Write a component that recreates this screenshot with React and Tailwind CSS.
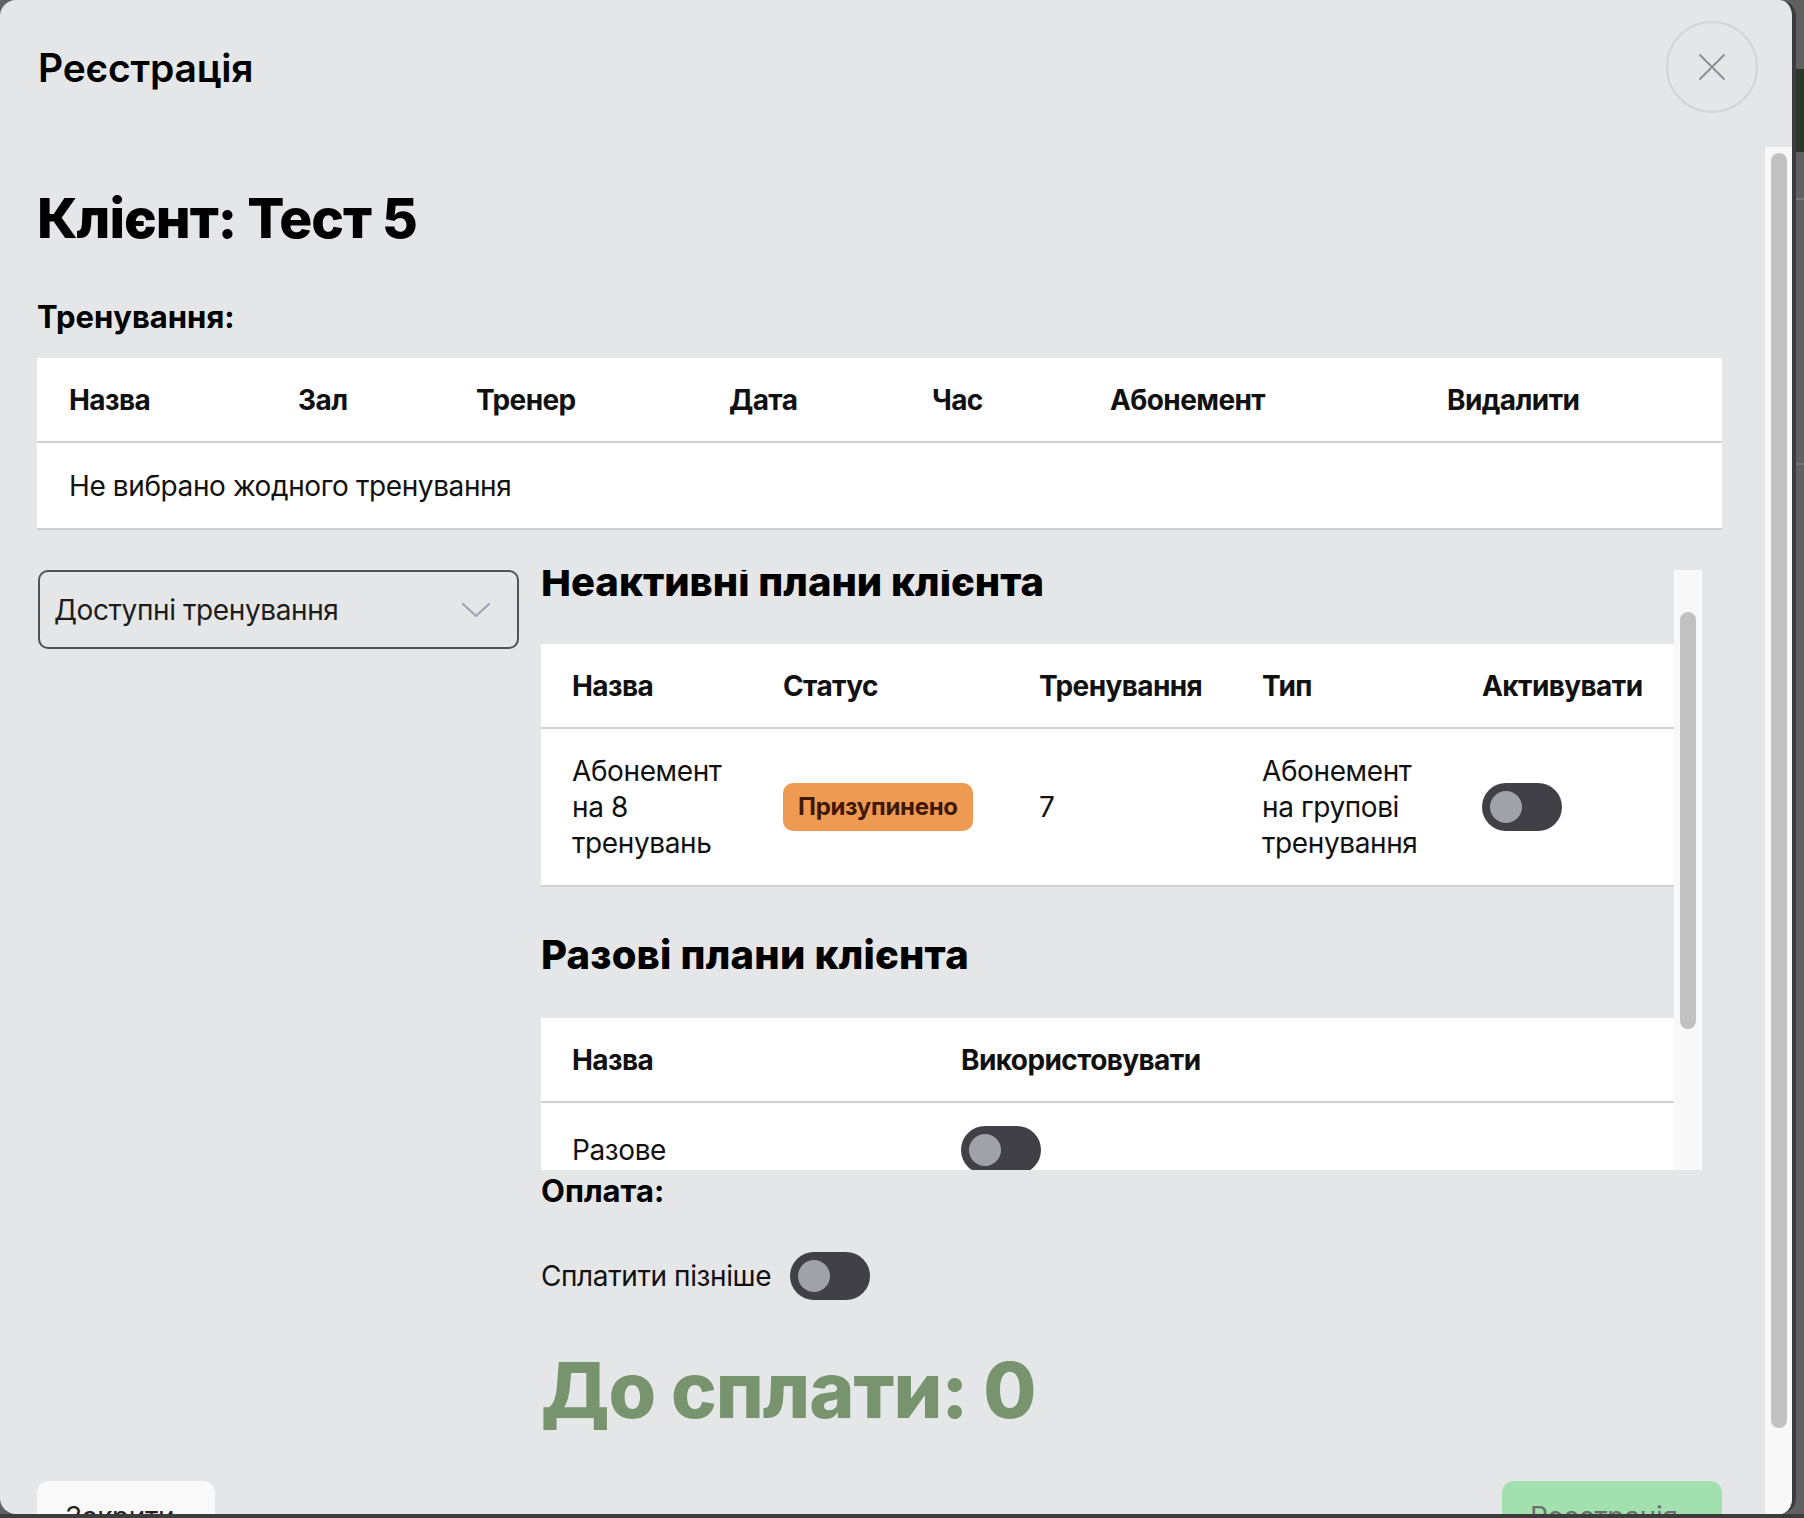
import React from 'react';

const Toggle = () => (
  <div className="w-[80px] h-[48px] rounded-full bg-[#414046] flex items-center px-[8px] shrink-0">
    <div className="w-[32px] h-[32px] rounded-full bg-[#a1a1aa]" />
  </div>
);

const Chevron = () => (
  <svg width="30" height="16" viewBox="0 0 30 16" fill="none">
    <path d="M2 2 L15 14 L28 2" stroke="#9ca3af" strokeWidth="2" strokeLinecap="round" strokeLinejoin="round" />
  </svg>
);

const CloseIcon = () => (
  <svg width="28" height="28" viewBox="0 0 28 28" fill="none">
    <path d="M2 2 L26 26 M26 2 L2 26" stroke="#8d8f94" strokeWidth="2" strokeLinecap="round" />
  </svg>
);

const trainingCols = ['Назва', 'Зал', 'Тренер', 'Дата', 'Час', 'Абонемент', 'Видалити'];

const App = () => {
  return (
    <div className="w-full h-[1518px] bg-[#606060] overflow-hidden flex flex-col font-['Inter','Noto_Sans',sans-serif] text-[#111]">
      <div className="flex h-[1514px]">
        {/* modal */}
        <div className="w-[1796px] h-[1514px] bg-[#e5e6e8] rounded-[16px] border-r-[4px] border-[#3b3b40] flex flex-col overflow-hidden shrink-0">
          <div className="h-[147px] flex justify-between items-start pl-[38px] pr-[34px] shrink-0">
            <h1 className="mt-[44px] text-[39px] leading-[48px] font-semibold tracking-[-0.2px] text-black">Реєстрація</h1>
            <button className="mt-[21px] w-[92px] h-[92px] rounded-full border-2 border-[#d3d4d7] flex items-center justify-center">
              <CloseIcon />
            </button>
          </div>

          <div className="flex flex-1 min-h-0">
            <div className="flex-1 pl-[37px] pr-[43px] pt-[38px] overflow-hidden">
              <h2 className="text-[55px] leading-[67px] font-extrabold tracking-[-1px] text-black">Клієнт: Тест 5</h2>
              <h3 className="mt-[45px] text-[31px] leading-[40px] font-bold text-black">Тренування:</h3>

              <div className="mt-[21px] bg-white">
                <div className="grid grid-cols-[229px_178px_253px_203px_178px_337px_1fr] h-[85px] items-center border-b-2 border-[#d0d0d0]">
                  {trainingCols.map((c) => (
                    <div key={c} className="pl-[32px] text-[28px] leading-[36px] font-bold tracking-[-0.6px]">{c}</div>
                  ))}
                </div>
                <div className="h-[87px] flex items-center pl-[32px] border-b-2 border-[#d0d0d0] text-[28px] leading-[36px] tracking-[-0.4px]">
                  Не вибрано жодного тренування
                </div>
              </div>

              <div className="mt-[40px] flex gap-[22px]">
                <div className="w-[481px] ml-[1px] shrink-0">
                  <div className="h-[79px] rounded-[10px] border-2 border-[#505055] flex items-center justify-between pl-[14px] pr-[26px]">
                    <span className="text-[28px] leading-[36px] tracking-[-0.4px] text-[#1c1c1c]">Доступні тренування</span>
                    <Chevron />
                  </div>
                </div>

                <div className="w-[1181px] flex flex-col">
                  <div className="w-[1161px] h-[600px] flex">
                    <div className="w-[1133px] overflow-hidden">
                      <div className="-mt-[18px]">
                        <h3 className="text-[40px] leading-[60px] font-extrabold text-black">Неактивні плани клієнта</h3>
                        <div className="mt-[32px] bg-white">
                          <div className="grid grid-cols-[211px_256px_223px_220px_1fr] h-[85px] items-center border-b-2 border-[#d0d0d0] text-[28px] leading-[36px] font-bold tracking-[-0.6px]">
                            <div className="pl-[31px]">Назва</div>
                            <div className="pl-[31px]">Статус</div>
                            <div className="pl-[31px]">Тренування</div>
                            <div className="pl-[31px]">Тип</div>
                            <div className="pl-[31px]">Активувати</div>
                          </div>
                          <div className="grid grid-cols-[211px_256px_223px_220px_1fr] h-[158px] items-center border-b-2 border-[#d0d0d0] text-[28px] leading-[36px] tracking-[-0.4px]">
                            <div className="pl-[31px] pr-[20px]">Абонемент на 8 тренувань</div>
                            <div className="pl-[31px]">
                              <span className="inline-flex items-center h-[48px] px-[15px] rounded-[10px] bg-[#ee9a52] text-[#3f1806] text-[24px] font-bold tracking-[-0.3px]">Призупинено</span>
                            </div>
                            <div className="pl-[31px]">7</div>
                            <div className="pl-[31px] pr-[20px]">Абонемент на групові тренування</div>
                            <div className="pl-[31px]"><Toggle /></div>
                          </div>
                        </div>

                        <h3 className="mt-[38px] text-[40px] leading-[60px] font-extrabold tracking-[0.2px] text-black">Разові плани клієнта</h3>
                        <div className="mt-[33px] bg-white">
                          <div className="grid grid-cols-[420px_1fr] h-[85px] items-center border-b-2 border-[#d0d0d0] text-[28px] leading-[36px] font-bold tracking-[-0.6px]">
                            <div className="pl-[31px]">Назва</div>
                            <div>Використовувати</div>
                          </div>
                          <div className="grid grid-cols-[420px_1fr] h-[96px] items-center border-b-2 border-[#d0d0d0] text-[28px] leading-[36px] tracking-[-0.4px]">
                            <div className="pl-[31px]">Разове</div>
                            <div><Toggle /></div>
                          </div>
                        </div>
                      </div>
                    </div>
                    <div className="w-[28px] bg-[#f8f8f8] pt-[42px] flex justify-center">
                      <div className="w-[16px] h-[417px] rounded-full bg-[#c1c1c1]" />
                    </div>
                  </div>

                  <h3 className="text-[31px] leading-[42px] font-bold text-black">Оплата:</h3>
                  <div className="mt-[40px] flex items-center gap-[19px]">
                    <span className="text-[28px] leading-[36px] tracking-[-0.4px]">Сплатити пізніше</span>
                    <Toggle />
                  </div>
                  <div className="mt-[43px] text-[77px] leading-[94px] font-extrabold tracking-[-1px] text-[#78946f]">До сплати: 0</div>
                </div>
              </div>

              <div className="mt-[44px] flex justify-between">
                <button className="w-[178px] h-[70px] pl-[28px] pt-[18px] rounded-[12px] bg-[#f9f9f9] text-[28px] leading-[36px] tracking-[-0.4px] text-[#222] flex items-start">Закрити</button>
                <button className="w-[220px] h-[70px] pl-[28px] pt-[18px] rounded-[12px] bg-[#a3e0b0] text-[28px] leading-[36px] tracking-[-0.4px] text-[#6b6f6b] flex items-start">Реєстрація</button>
              </div>
            </div>

            <div className="w-[27px] bg-[#f8f8f8] pt-[6px] flex justify-center shrink-0">
              <div className="w-[16px] h-[1275px] rounded-full bg-[#c1c1c1]" />
            </div>
          </div>
        </div>

        <div className="flex-1 flex flex-col">
          <div className="h-[69px]" />
          <div className="h-[83px] bg-[#2b372b]" />
          <div className="h-[46px]" />
          <div className="h-[2px] bg-[#777]" />
          <div className="h-[263px]" />
          <div className="h-[2px] bg-[#777]" />
        </div>
      </div>
      <div className="h-[4px] bg-[#3c3c3c]" />
    </div>
  );
};

export default App;
